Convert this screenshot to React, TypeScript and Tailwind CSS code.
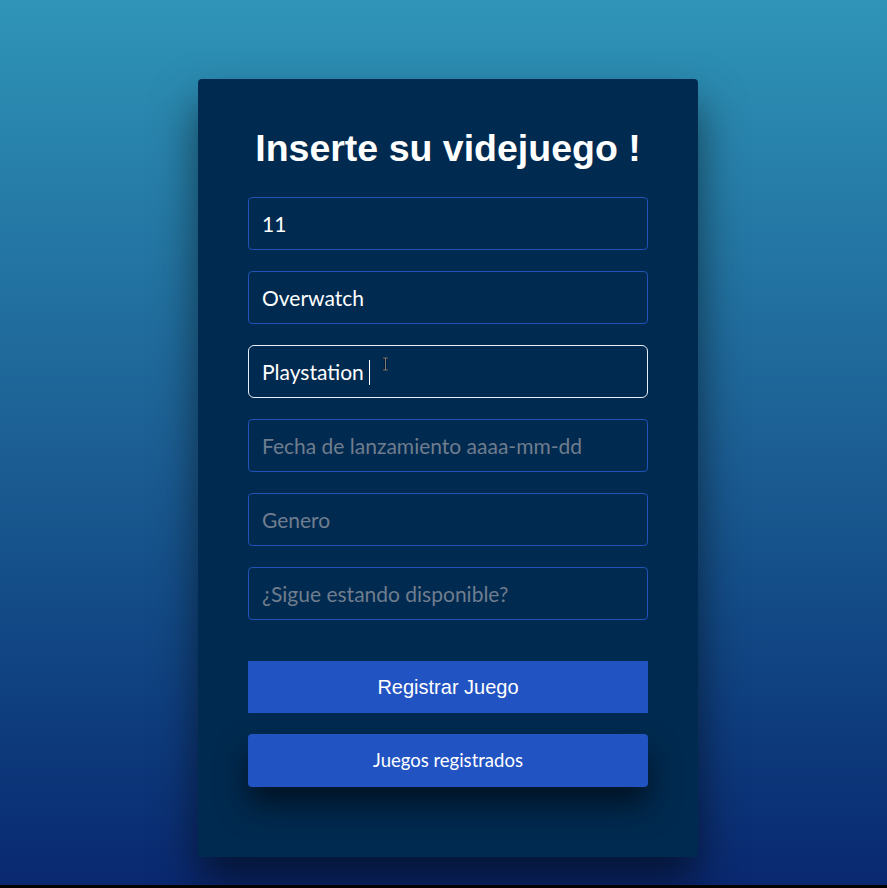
export default function App() {
  const inputCls =
    "w-full h-[53px] rounded-[4px] border border-[#2052b8] bg-[#012a50] px-[13px] text-[21px] text-white placeholder:text-[#6f7d8e] outline-none font-['Lato',sans-serif]";

  return (
    <div className="h-[888px] overflow-hidden bg-black">
      <div className="h-[885px] bg-gradient-to-b from-[#2f94b7] via-[#1c5f94] to-[#0a2870] pt-[79px]">
        <div className="ml-[198px] w-[500px] h-[778px] rounded-[4px] bg-[#012a50] px-[50px] pt-[49px] shadow-[0_25px_45px_rgba(0,0,0,0.55)]">
          <h1 className="text-center text-[37.5px] leading-[41px] font-bold text-white font-['Liberation_Sans',Arial,sans-serif]">
            Inserte su videjuego !
          </h1>

          <div className="mt-[28px] flex flex-col gap-[21px]">
            <input className={inputCls} defaultValue="11" readOnly />
            <input className={inputCls} defaultValue="Overwatch" readOnly />
            <div className="relative">
              <input
                className="w-full h-[53px] rounded-[6px] border-[1.5px] border-[#e8eef8] bg-[#012a50] px-[13px] text-[21px] text-white outline-none font-['Lato',sans-serif]"
                defaultValue="Playstation"
                readOnly
              />
              <span className="absolute left-[121px] top-[15px] h-[25px] w-px bg-white" />
              <svg className="absolute left-[134px] top-[12px]" width="7" height="14" viewBox="0 0 7 14">
                <path d="M1 1h5M3.5 1v12M1 13h5" stroke="#000" strokeWidth="1.6" fill="none" />
                <path d="M1 1h5M3.5 1v12M1 13h5" stroke="#fff" strokeWidth="0.5" fill="none" />
              </svg>
            </div>
            <input className={inputCls} placeholder="Fecha de lanzamiento aaaa-mm-dd" readOnly />
            <input className={inputCls} placeholder="Genero" readOnly />
            <input className={inputCls} placeholder="¿Sigue estando disponible?" readOnly />
          </div>

          <button className="mt-[41px] w-full h-[52px] bg-[#2253c2] text-white text-[20px] font-['Liberation_Sans',Arial,sans-serif]">
            Registrar Juego
          </button>
          <button className="mt-[21px] w-full h-[53px] rounded-[4px] bg-[#2253c2] text-white text-[18.5px] font-['Lato',sans-serif] shadow-[0_18px_30px_rgba(0,0,0,0.55)]">
            Juegos registrados
          </button>
        </div>
      </div>
    </div>
  );
}
